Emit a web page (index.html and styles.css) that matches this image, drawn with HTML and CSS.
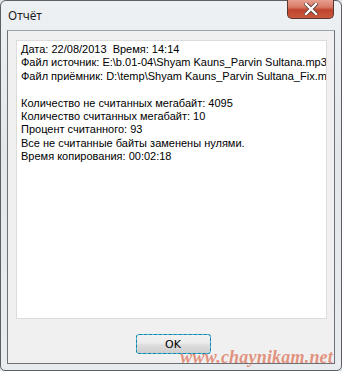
FILE: index.html
```html
<!DOCTYPE html>
<html lang="ru">
<head>
    <meta charset="UTF-8">
    <title>Отчёт</title>
    <link rel="stylesheet" href="styles.css">
</head>
<body>

<div class="window">
    <div class="titlebar">
        <span class="title">Отчёт</span>
        <button class="close-btn" aria-label="Закрыть">
            <svg width="14" height="12" viewBox="0 0 14 12">
                <path d="M2 1 L12 11 M12 1 L2 11" stroke="#5a3a30" stroke-width="4" stroke-linecap="square"/>
                <path d="M2 1 L12 11 M12 1 L2 11" stroke="#ffffff" stroke-width="2.4" stroke-linecap="square"/>
            </svg>
        </button>
    </div>

    <div class="client">
        <div class="memo">
            <p>Дата: 22/08/2013&nbsp; Время: 14:14</p>
            <p>Файл источник: E:\b.01-04\Shyam Kauns_Parvin Sultana.mp3</p>
            <p>Файл приёмник: D:\temp\Shyam Kauns_Parvin Sultana_Fix.mp3</p>
            <p>&nbsp;</p>
            <p>Количество не считанных мегабайт: 4095</p>
            <p>Количество считанных мегабайт: 10</p>
            <p>Процент считанного: 93</p>
            <p>Все не считанные байты заменены нулями.</p>
            <p>Время копирования: 00:02:18</p>
        </div>
        <div class="buttons">
            <button class="ok-btn">OK</button>
        </div>
    </div>

    <span class="watermark">www.chaynikam.net</span>
</div>

</body>
</html>
```

FILE: styles.css
```css
body {
    margin: 0;
    padding: 0;
    background: #dfe3e6;
}
.window {
    position: relative;
    width: 342px;
    height: 371px;
    box-sizing: border-box;
    border: 1px solid #5c6066;
    border-radius: 6px 6px 5px 5px;
    background: linear-gradient(180deg, #eef1f3 0%, #e3e7ea 40%, #e9ecee 100%);
    padding: 0 6px 6px 6px;
    display: flex;
    flex-direction: column;
}
.titlebar {
    height: 29px;
    display: flex;
    align-items: flex-start;
    justify-content: space-between;
}
.title {
    font-family: "Noto Sans", "DejaVu Sans", sans-serif;
    font-size: 12px;
    color: #1e1e1e;
    margin-top: 6px;
    margin-left: 1px;
}
.close-btn {
    width: 47px;
    height: 19px;
    margin-right: 1px;
    margin-top: -1px;
    border: 1px solid #5b3530;
    border-top: none;
    border-radius: 0 0 5px 5px;
    background: linear-gradient(180deg, #e8a090 0%, #d77a66 40%, #c0442e 55%, #c9593f 100%);
    display: flex;
    align-items: center;
    justify-content: center;
    padding: 0;
}
.client {
    flex: 1;
    background: #f0f0f0;
    border: 1px solid #6d7075;
    border-top-color: #9fa3a8;
    display: flex;
    flex-direction: column;
    padding: 9px 7px 0 8px;
}
.memo {
    height: 275px;
    background: #ffffff;
    border: 1px solid #dcdcdc;
    padding: 2px 0 0 4px;
    overflow: hidden;
    white-space: nowrap;
    font-family: "Liberation Sans", Arial, sans-serif;
    font-size: 11px;
    line-height: 13.4px;
    color: #000000;
}
.memo p {
    margin: 0;
}
.buttons {
    display: flex;
    justify-content: center;
    padding-top: 15px;
    padding-left: 3px;
}
.ok-btn {
    width: 75px;
    height: 20px;
    border: 1px solid #3cc3e8;
    border-radius: 3px;
    background: linear-gradient(180deg, #f2f2f2 0%, #ebebeb 45%, #dddddd 55%, #cfcfcf 100%);
    font-family: "DejaVu Sans", sans-serif;
    font-size: 11px;
    color: #000000;
    padding: 0;
    outline: 1px dashed rgba(20, 70, 90, 0.55);
    outline-offset: -1px;
}
.watermark {
    position: absolute;
    right: 8px;
    bottom: 4px;
    font-family: "Liberation Serif", serif;
    font-style: italic;
    font-weight: bold;
    font-size: 18px;
    line-height: 18px;
    letter-spacing: 0.2px;
    color: rgba(222, 120, 95, 0.8);
}
```
